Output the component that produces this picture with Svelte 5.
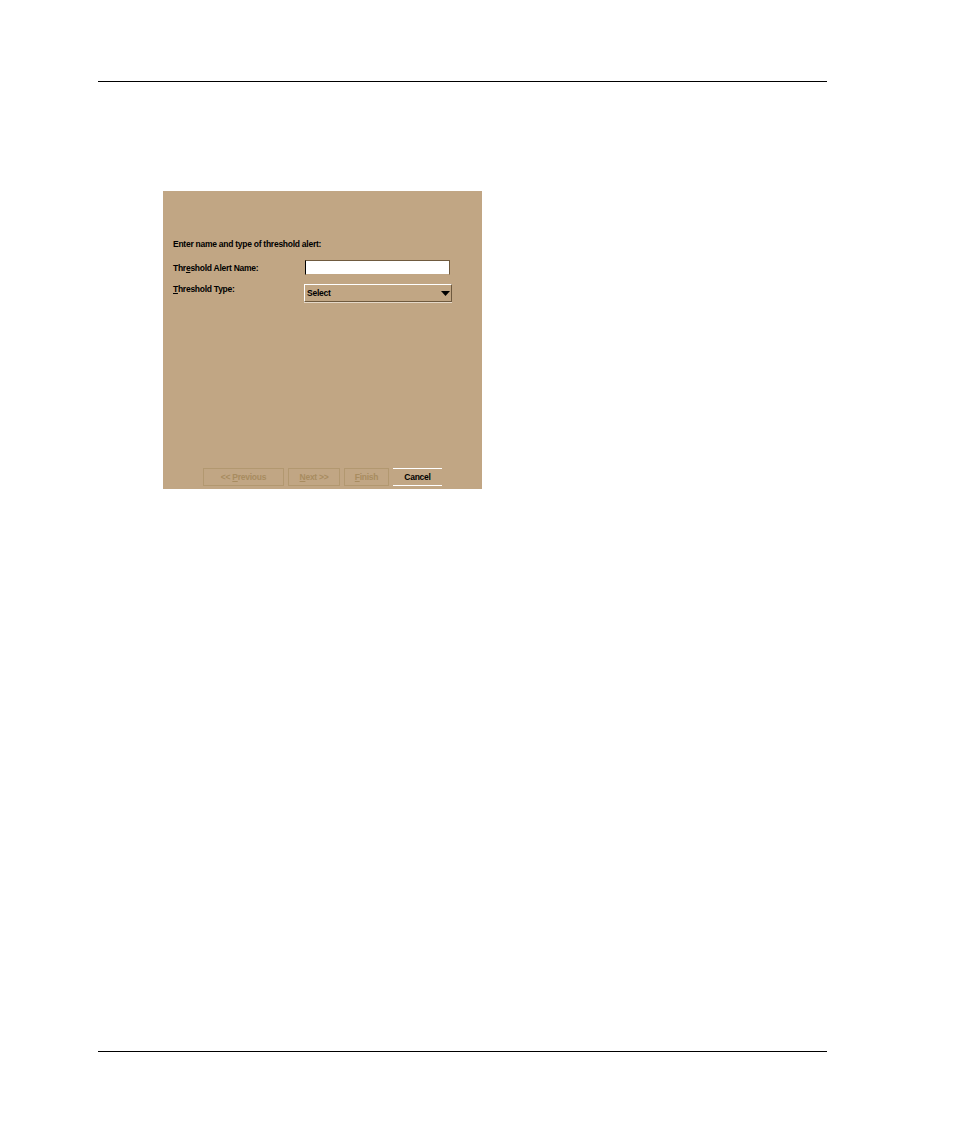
<script lang="ts">
    // wizard step: threshold alert name and type
    const buttons = [
        { pre: '<< ', key: 'P', rest: 'revious', cls: 'prev' },
        { pre: '', key: 'N', rest: 'ext >>', cls: 'next' },
        { pre: '', key: 'F', rest: 'inish', cls: 'finish' }
    ];
</script>

<div class="page">
    <hr class="rule" />
    <section class="panel">
        <p class="intro">Enter name and type of threshold alert:</p>

        <div class="row name-row">
            <label for="alert-name">Thr<u>e</u>shold Alert Name:</label>
            <input id="alert-name" type="text" />
        </div>

        <div class="row type-row">
            <span class="label"><u>T</u>hreshold Type:</span>
            <div class="select">
                <span>Select</span>
                <svg width="9" height="5" viewBox="0 0 9 5"><path d="M0 0h9L4.500 5z" fill="#000" /></svg>
            </div>
        </div>

        <div class="actions">
            {#each buttons as b}
                <button class="btn {b.cls}" disabled>{b.pre}<u>{b.key}</u>{b.rest}</button>
            {/each}
            <button class="btn cancel">Cancel</button>
        </div>
    </section>
    <hr class="rule bottom" />
</div>

<style>
    :global(body) { margin: 0; background: #fff; }

    .page {
        box-sizing: border-box;
        height: 1145px;
        padding: 81px 127px 0 98px;
        font-family: "Liberation Sans", Arial, sans-serif;
    }
    .rule { margin: 0; border: 0; height: 1px; background: #000; }
    .rule.bottom { margin-top: 562px; }

    .panel {
        box-sizing: border-box;
        width: 319px;
        height: 298px;
        margin: 109px 0 0 65px;
        padding: 47px 0 0 10px;
        background: #c1a684;
        font-size: 8.500px;
        letter-spacing: -0.26px;
        font-weight: bold;
        color: #000;
        display: flex;
        flex-direction: column;
    }
    .intro { margin: 0; line-height: 12px; }

    .row { display: flex; }
    .row label, .row .label { width: 131px; line-height: 12px; }
    .name-row { margin-top: 9px; height: 17px; align-items: center; }
    .type-row { margin-top: 7px; height: 19px; }

    input {
        box-sizing: border-box;
        width: 145px;
        height: 15px;
        margin: 0 0 0 1px;
        padding: 0;
        background: #fff;
        border: 1px solid #c1a684;
        border-top-color: #6f5a3f;
        border-left-color: #000;
        border-right-color: #6f5a3f;
        outline: none;
    }
    .select {
        box-sizing: border-box;
        width: 148px;
        height: 18px;
        margin-top: 1px;
        padding: 0 1px 0 2px;
        display: flex;
        align-items: center;
        justify-content: space-between;
        border: 1px solid #fff;
        border-right-color: #6f5a3f;
        border-bottom-color: #6f5a3f;
        box-shadow: 0 1px 0 #e6d9c8;
    }

    .actions {
        margin-top: auto;
        margin-bottom: 3px;
        margin-left: 30px;
        display: flex;
        gap: 4px;
    }
    .btn {
        box-sizing: border-box;
        height: 18px;
        padding: 0;
        background: transparent;
        font: inherit;
        letter-spacing: inherit;
        text-align: center;
    }
    .btn:disabled { color: #a88c60; border: 1px solid #b29870; }
    .prev { width: 81px; }
    .next { width: 52px; }
    .finish { width: 45px; }
    .cancel {
        width: 49px;
        color: #000;
        border: 0;
        border-top: 1px solid #fff;
        border-bottom: 1px solid #fff;
    }
</style>
